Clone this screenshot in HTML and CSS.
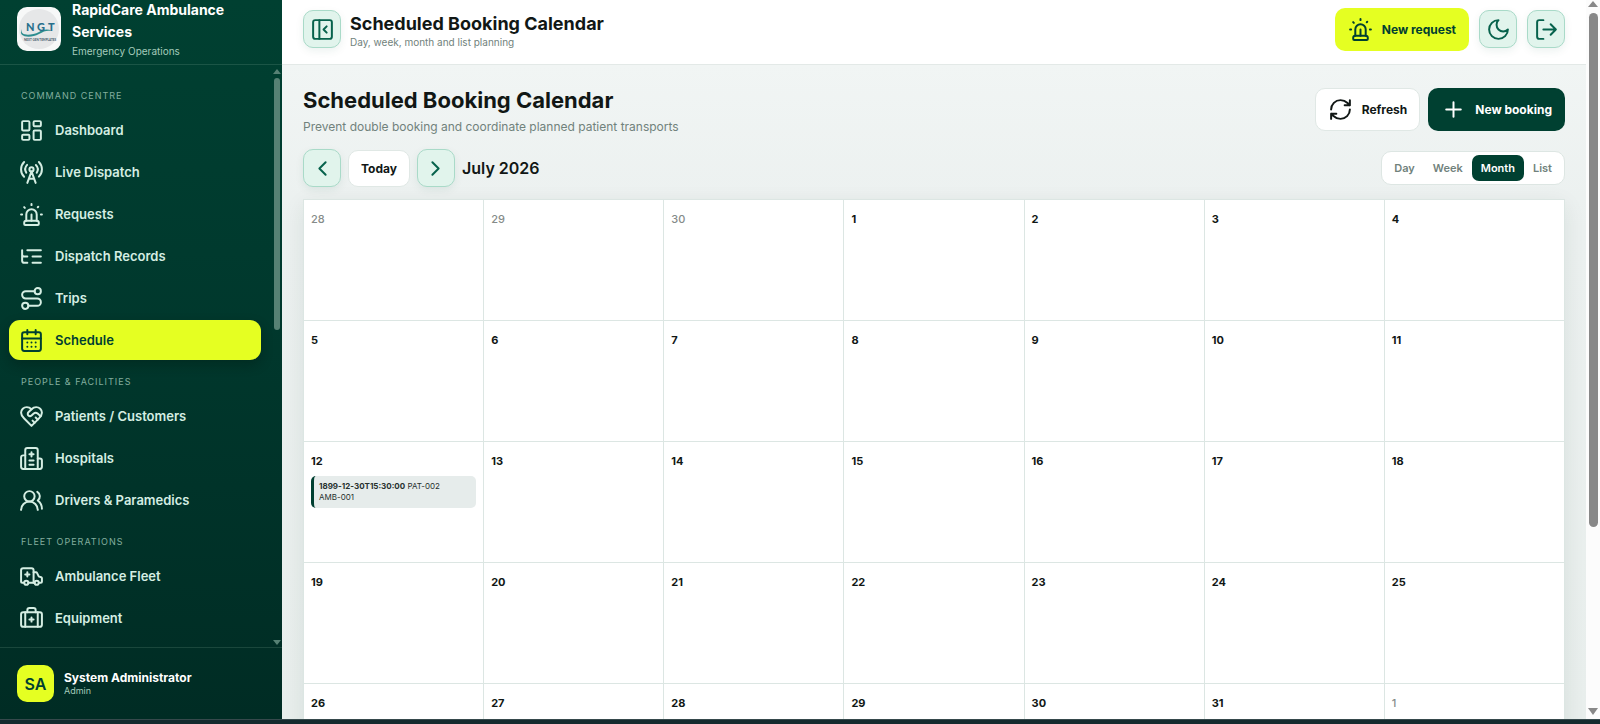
FILE: index.html
```html
<!DOCTYPE html>
<html lang="en">
<head>
<meta charset="utf-8">
<meta name="viewport" content="width=device-width, initial-scale=1">
<title>Scheduled Booking Calendar</title>
<link rel="stylesheet" href="styles.css">
</head>
<body>
<svg class="sprite" aria-hidden="true">
  <symbol id="siren" viewBox="0 0 24 24"><path d="M7 18v-6a5 5 0 1 1 10 0v6"/><path d="M5 21a1 1 0 0 0 1 1h12a1 1 0 0 0 1-1v-1a2 2 0 0 0-2-2H7a2 2 0 0 0-2 2z"/><path d="M21 12h1M18.5 4.5 18 5M2 12h1M12 2v1M4.929 4.929l.707.707M12 12v6"/></symbol>
</svg>
<div class="app">
  <aside class="sidebar">
    <div class="brand">
      <svg class="logo" viewBox="0 0 44 44" role="img" aria-label="NGT">
        <rect width="44" height="44" rx="10" fill="#f7f8f8"/>
        <circle cx="22" cy="22" r="20" fill="#e6e7e8"/>
        <path d="M5 22c-3 7 9 7 17 3 5-3 9-3 13-1-5-1-8 0-13 3-9 5-22 3-17-5z" fill="#2d8d8f"/>
        <text class="logo-text" x="9" y="24">N</text><text class="logo-text" x="20" y="24">G</text><text class="logo-text" x="31" y="24">T</text>
        <text class="logo-note" x="7" y="34">NEXT GEN TEMPLATES</text>
      </svg>
      <div class="brand-text">
        <div class="brand-name">RapidCare Ambulance Services</div>
        <div class="brand-sub">Emergency Operations</div>
      </div>
    </div>
    <div class="nav-wrap">
      <nav class="nav" aria-label="Main">
        <h2 class="nav-head">COMMAND CENTRE</h2>
        <a class="nav-item" href="#"><svg class="icon" viewBox="0 0 24 24"><rect width="7" height="9" x="3" y="3" rx="1"/><rect width="7" height="5" x="14" y="3" rx="1"/><rect width="7" height="9" x="14" y="12" rx="1"/><rect width="7" height="5" x="3" y="16" rx="1"/></svg>Dashboard</a>
        <a class="nav-item" href="#"><svg class="icon" viewBox="0 0 24 24"><path d="M4.9 16.1C1 12.2 1 5.8 4.9 1.9M7.8 4.7a6.14 6.14 0 0 0-.8 7.5"/><circle cx="12" cy="9" r="2"/><path d="M16.2 4.8c2 2 2.26 5.11.8 7.47M19.1 1.9a9.96 9.96 0 0 1 0 14.1M9.5 18h5M8 22l4-11 4 11"/></svg>Live Dispatch</a>
        <a class="nav-item" href="#"><svg class="icon"><use href="#siren"/></svg>Requests</a>
        <a class="nav-item" href="#"><svg class="icon" viewBox="0 0 24 24"><path d="M21 12h-8M21 6H8M21 18h-8M3 6v4c0 1.1.9 2 2 2h3M3 10v6c0 1.1.9 2 2 2h3"/></svg>Dispatch Records</a>
        <a class="nav-item" href="#"><svg class="icon" viewBox="0 0 24 24"><circle cx="6" cy="19" r="3"/><path d="M9 19h8.5a3.5 3.5 0 0 0 0-7h-11a3.5 3.5 0 0 1 0-7H15"/><circle cx="18" cy="5" r="3"/></svg>Trips</a>
        <a class="nav-item active" href="#" aria-current="page"><svg class="icon" viewBox="0 0 24 24"><path d="M8 2v4M16 2v4M3 10h18M8 14h.01M12 14h.01M16 14h.01M8 18h.01M12 18h.01M16 18h.01"/><rect width="18" height="18" x="3" y="4" rx="2"/></svg>Schedule</a>
        <h2 class="nav-head">PEOPLE &amp; FACILITIES</h2>
        <a class="nav-item" href="#"><svg class="icon" viewBox="0 0 24 24"><path d="M19 14c1.49-1.46 3-3.21 3-5.5A5.5 5.5 0 0 0 16.5 3c-1.76 0-3 .5-4.5 2-1.5-1.5-2.74-2-4.5-2A5.5 5.5 0 0 0 2 8.5c0 2.3 1.5 4.05 3 5.5l7 7Z"/><path d="M12 5 9.04 7.96a2.17 2.17 0 0 0 0 3.08c.82.82 2.13.85 3 .07l2.07-1.9a2.82 2.82 0 0 1 3.79 0l2.96 2.66M18 15l-2-2M15 18l-2-2"/></svg>Patients / Customers</a>
        <a class="nav-item" href="#"><svg class="icon" viewBox="0 0 24 24"><path d="M12 6v4M14 14h-4M14 18h-4M14 8h-4"/><path d="M18 12h2a2 2 0 0 1 2 2v6a2 2 0 0 1-2 2H4a2 2 0 0 1-2-2v-9a2 2 0 0 1 2-2h2"/><path d="M18 22V4a2 2 0 0 0-2-2H8a2 2 0 0 0-2 2v18"/></svg>Hospitals</a>
        <a class="nav-item" href="#"><svg class="icon" viewBox="0 0 24 24"><path d="M18 21a8 8 0 0 0-16 0"/><circle cx="10" cy="8" r="5"/><path d="M22 20c0-3.37-2-6.5-4-8a5 5 0 0 0-.45-8.3"/></svg>Drivers &amp; Paramedics</a>
        <h2 class="nav-head">FLEET OPERATIONS</h2>
        <a class="nav-item" href="#"><svg class="icon" viewBox="0 0 24 24"><path d="M10 10H6M8 8v4M14 18V6a2 2 0 0 0-2-2H4a2 2 0 0 0-2 2v11a1 1 0 0 0 1 1h2"/><path d="M19 18h2a1 1 0 0 0 1-1v-3.28a1 1 0 0 0-.684-.948l-1.923-.641a1 1 0 0 1-.578-.502l-1.539-3.076A1 1 0 0 0 16.382 8H14M9 18h6"/><circle cx="17" cy="18" r="2"/><circle cx="7" cy="18" r="2"/></svg>Ambulance Fleet</a>
        <a class="nav-item" href="#"><svg class="icon" viewBox="0 0 24 24"><path d="M12 11v4M14 13h-4M16 6V4a2 2 0 0 0-2-2h-4a2 2 0 0 0-2 2v2M18 6v14M6 6v14"/><rect width="20" height="14" x="2" y="6" rx="2"/></svg>Equipment</a>
      </nav>
      <div class="side-scroll" aria-hidden="true"><i class="arrow-up"></i><i class="side-thumb"></i><i class="arrow-down"></i></div>
    </div>
    <div class="user">
      <div class="avatar">SA</div>
      <div>
        <div class="user-name">System Administrator</div>
        <div class="user-role">Admin</div>
      </div>
    </div>
  </aside>

  <div class="main">
    <header class="topbar">
      <button class="icon-btn" aria-label="Collapse sidebar"><svg class="icon" viewBox="0 0 24 24"><rect width="18" height="18" x="3" y="3" rx="2"/><path d="M9 3v18M16 15l-3-3 3-3"/></svg></button>
      <div class="topbar-title">
        <div class="top-name">Scheduled Booking Calendar</div>
        <div class="top-sub">Day, week, month and list planning</div>
      </div>
      <div class="top-actions">
        <button class="btn lime"><svg class="icon"><use href="#siren"/></svg>New request</button>
        <button class="icon-btn" aria-label="Dark mode"><svg class="icon" viewBox="0 0 24 24"><path d="M12 3a6 6 0 0 0 9 9 9 9 0 1 1-9-9Z"/></svg></button>
        <button class="icon-btn" aria-label="Sign out"><svg class="icon" viewBox="0 0 24 24"><path d="M9 21H5a2 2 0 0 1-2-2V5a2 2 0 0 1 2-2h4M16 17l5-5-5-5M21 12H9"/></svg></button>
      </div>
    </header>

    <main class="content">
      <div class="page-head">
        <div>
          <h1 class="page-title">Scheduled Booking Calendar</h1>
          <p class="page-sub">Prevent double booking and coordinate planned patient transports</p>
        </div>
        <div class="page-actions">
          <button class="btn plain"><svg class="icon" viewBox="0 0 24 24"><path d="M3 12a9 9 0 0 1 9-9 9.75 9.75 0 0 1 6.74 2.74L21 8M21 3v5h-5M21 12a9 9 0 0 1-9 9 9.75 9.75 0 0 1-6.74-2.74L3 16M8 16H3v5"/></svg>Refresh</button>
          <button class="btn dark"><svg class="icon" viewBox="0 0 24 24"><path d="M5 12h14M12 5v14"/></svg>New booking</button>
        </div>
      </div>

      <div class="toolbar">
        <button class="icon-btn" aria-label="Previous month"><svg class="icon" viewBox="0 0 24 24"><path d="m15 18-6-6 6-6"/></svg></button>
        <button class="today">Today</button>
        <button class="icon-btn" aria-label="Next month"><svg class="icon" viewBox="0 0 24 24"><path d="m9 18 6-6-6-6"/></svg></button>
        <h2 class="month">July 2026</h2>
        <div class="segmented" role="group" aria-label="View">
          <button class="seg">Day</button><button class="seg">Week</button><button class="seg on" aria-pressed="true">Month</button><button class="seg">List</button>
        </div>
      </div>

      <table class="calendar" aria-label="July 2026">
        <tbody>
          <tr><td class="out">28</td><td class="out">29</td><td class="out">30</td><td>1</td><td>2</td><td>3</td><td>4</td></tr>
          <tr><td>5</td><td>6</td><td>7</td><td>8</td><td>9</td><td>10</td><td>11</td></tr>
          <tr><td>12<div class="event"><b>1899-12-30T15:30:00</b> PAT-002<br>AMB-001</div></td><td>13</td><td>14</td><td>15</td><td>16</td><td>17</td><td>18</td></tr>
          <tr><td>19</td><td>20</td><td>21</td><td>22</td><td>23</td><td>24</td><td>25</td></tr>
          <tr><td>26</td><td>27</td><td>28</td><td>29</td><td>30</td><td>31</td><td class="out">1</td></tr>
        </tbody>
      </table>
    </main>
  </div>
  <div class="page-scroll" aria-hidden="true"><i class="arrow-up"></i><i class="page-thumb"></i><i class="arrow-down"></i></div>
</div>
<div class="strip"></div>
</body>
</html>
```
FILE: styles.css
```css
* { box-sizing: border-box; }

body {
  margin: 0;
  height: 100vh;
  display: flex;
  flex-direction: column;
  overflow: hidden;
  font-family: Inter, "Liberation Sans", sans-serif;
  font-size: 13px;
  color: #111715;
  background: #f0f4f3;
}

h1, h2, p { margin: 0; }
button { font: inherit; color: inherit; cursor: pointer; }

.sprite { position: absolute; width: 0; height: 0; }
.icon {
  width: 25px;
  height: 25px;
  flex: none;
  fill: none;
  stroke: currentColor;
  stroke-width: 1.9;
  stroke-linecap: round;
  stroke-linejoin: round;
}

.app { flex: 1; min-height: 0; display: flex; }
.strip { height: 5px; flex: none; background: #152a2e; border-top: 1px solid #36494c; }

/* Sidebar */
.sidebar {
  width: 282px;
  flex: none;
  display: flex;
  flex-direction: column;
  color: #d5eee3;
  background: linear-gradient(180deg, #004031 0%, #003a2e 35%, #002c24 100%);
}
.brand {
  height: 65px;
  flex: none;
  display: flex;
  align-items: center;
  gap: 11px;
  padding: 0 17px 6px;
  border-bottom: 1px solid #1b5546;
}
.logo { width: 44px; height: 44px; flex: none; }
.logo-text { font: 900 11px Lato, sans-serif; fill: #286f8c; }
.logo-note { font: 700 3px Lato, sans-serif; fill: #456; }
.brand-name { font-size: 14px; line-height: 22px; font-weight: 700; color: #fff; }
.brand-sub { font-size: 10px; line-height: 16px; color: #a4cbbb; }

.nav-wrap { flex: 1; min-height: 0; display: flex; overflow: hidden; }
.nav { flex: 1; display: flex; flex-direction: column; gap: 2px; padding: 11px 12px 0 9px; }
.nav-head {
  padding: 13px 12px 5px;
  font-size: 9px;
  line-height: 14px;
  font-weight: 400;
  letter-spacing: 1px;
  color: #83ae9e;
}
.nav-item {
  height: 40px;
  flex: none;
  display: flex;
  align-items: center;
  gap: 11px;
  padding: 0 10px;
  border-radius: 11px;
  font-size: 13px;
  font-weight: 600;
  color: inherit;
  text-decoration: none;
}
.nav-item.active { color: #004031; background: #e5ff22; box-shadow: 0 5px 12px rgba(0, 20, 14, .3); }

.side-scroll { width: 9px; display: flex; flex-direction: column; align-items: center; gap: 4px; padding: 4px 2px 2px 0; color: #568174; }
.side-thumb { width: 6px; height: 252px; border-radius: 3px; background: #568174; }
.arrow-up { border: 4px solid transparent; border-top: 0; border-bottom: 5px solid; border-left-color: transparent; border-right-color: transparent; }
.arrow-down { margin-top: auto; border: 4px solid transparent; border-bottom: 0; border-top: 5px solid; border-left-color: transparent; border-right-color: transparent; }

.user {
  height: 72px;
  flex: none;
  display: flex;
  align-items: center;
  gap: 10px;
  padding: 0 17px;
  border-top: 1px solid #1a473c;
}
.avatar {
  width: 37px;
  height: 37px;
  display: grid;
  place-items: center;
  border-radius: 10px;
  font-size: 16px;
  font-weight: 600;
  color: #004031;
  background: #e5ff22;
}
.user-name { font-size: 12px; line-height: 14px; font-weight: 700; color: #fff; }
.user-role { font-size: 9px; line-height: 12px; color: #a4cbbb; }

/* Main column */
.main { flex: 1; min-width: 0; display: flex; flex-direction: column; overflow: hidden; }
.topbar {
  height: 65px;
  flex: none;
  display: flex;
  align-items: center;
  gap: 9px;
  padding: 0 21px 6px;
  background: #fff;
  border-bottom: 1px solid #e3e9e7;
}
.topbar-title { padding-top: 3px; }
.top-name { font-size: 18px; line-height: 22px; font-weight: 700; }
.top-sub { font-size: 10px; line-height: 14px; color: #71827c; }
.top-actions { margin-left: auto; display: flex; align-items: center; gap: 10px; }

.icon-btn {
  width: 38px;
  height: 38px;
  flex: none;
  display: grid;
  place-items: center;
  padding: 0;
  border: 1px solid #a9dac8;
  border-radius: 10px;
  color: #07624c;
  background: #e1f4ec;
  box-shadow: 0 3px 8px rgba(0, 90, 65, .08);
}
.btn {
  height: 43px;
  display: flex;
  align-items: center;
  gap: 9px;
  padding: 0 12px;
  border: 1px solid transparent;
  border-radius: 10px;
  font-size: 12px;
  font-weight: 700;
}
.lime { color: #004031; background: #e5ff22; }
.plain { background: #fff; border-color: #e0e8e5; }
.dark { color: #fff; background: #004031; }

.content { flex: 1; min-height: 0; padding: 21px 21px 0; overflow: hidden; background: linear-gradient(180deg, #f1f5f4, #ebf0ef 25%, #e8eeec); }
.page-head { display: flex; justify-content: space-between; align-items: center; }
.page-title { font-size: 22px; line-height: 28px; font-weight: 700; }
.page-sub { padding-top: 4px; font-size: 12px; line-height: 18px; color: #71827c; }
.page-actions { display: flex; gap: 8px; padding-bottom: 4px; }

.toolbar { display: flex; align-items: center; gap: 7px; padding: 13px 0 12px; }
.today { height: 37px; padding: 0 12px; border: 1px solid #e0e8e5; border-radius: 10px; font-size: 12px; font-weight: 700; background: #fff; }
.month { font-size: 16px; line-height: 24px; font-weight: 600; }
.segmented { margin-left: auto; display: flex; padding: 3px; border: 1px solid #dde6e3; border-radius: 10px; background: #fff; }
.seg { height: 26px; padding: 0 9px; border: 0; border-radius: 7px; font-size: 11px; font-weight: 600; color: #71827c; background: none; }
.seg.on { color: #fff; background: #004031; }

.calendar {
  width: 100%;
  table-layout: fixed;
  border-collapse: collapse;
  background: #fff;
  box-shadow: 0 5px 20px rgba(0, 50, 38, .08);
}
.calendar td {
  height: 121px;
  padding: 11px 7px 0;
  border: 1px solid #dce6e3;
  vertical-align: top;
  font-size: 11px;
  line-height: 16px;
  font-weight: 700;
}
.calendar .out { font-weight: 500; color: #858b89; }
.event {
  margin-top: 7px;
  padding: 5px;
  border-left: 3px solid #004031;
  border-radius: 5px;
  font-size: 8px;
  line-height: 11px;
  font-weight: 400;
  color: #26312e;
  background: #e6eceb;
}

.page-scroll { width: 14px; flex: none; display: flex; flex-direction: column; align-items: center; gap: 6px; padding: 1px 0 4px; color: #888; background: #fcfcfc; }
.page-scroll .arrow-up { border-width: 0 5px 6px; }
.page-scroll .arrow-down { border-width: 7px 5px 0; }
.page-thumb { width: 9px; height: 72%; border-radius: 5px; background: #888; }
```
